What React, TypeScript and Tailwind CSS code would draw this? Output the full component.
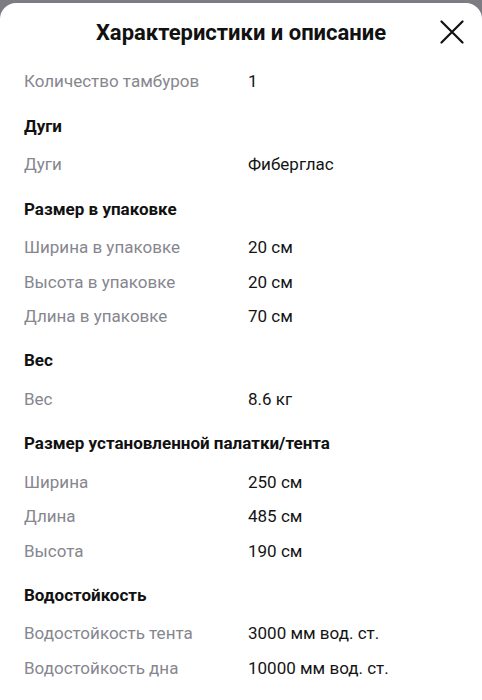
type Row = { label: string; value: string };
type Section = { title?: string; rows: Row[] };

const sections: Section[] = [
  { rows: [{ label: "Количество тамбуров", value: "1" }] },
  { title: "Дуги", rows: [{ label: "Дуги", value: "Фиберглас" }] },
  {
    title: "Размер в упаковке",
    rows: [
      { label: "Ширина в упаковке", value: "20 см" },
      { label: "Высота в упаковке", value: "20 см" },
      { label: "Длина в упаковке", value: "70 см" },
    ],
  },
  { title: "Вес", rows: [{ label: "Вес", value: "8.6 кг" }] },
  {
    title: "Размер установленной палатки/тента",
    rows: [
      { label: "Ширина", value: "250 см" },
      { label: "Длина", value: "485 см" },
      { label: "Высота", value: "190 см" },
    ],
  },
  {
    title: "Водостойкость",
    rows: [
      { label: "Водостойкость тента", value: "3000 мм вод. ст." },
      { label: "Водостойкость дна", value: "10000 мм вод. ст." },
    ],
  },
];

export default function App() {
  return (
    <div className="h-[700px] w-[482px] overflow-hidden bg-[#7c7c82] pt-[3px] font-['Roboto',sans-serif]">
      <div className="h-full rounded-t-[16px] bg-white">
        {/* шапка */}
        <div className="relative flex h-[58px] items-center justify-center">
          <h1 className="text-[22px] font-bold text-[#111]">Характеристики и описание</h1>
          <button className="absolute right-[18px] top-[17px] text-[#111]">
            <svg width="24" height="24" viewBox="0 0 24 24" fill="none" stroke="currentColor" strokeWidth="2.2" strokeLinecap="round">
              <path d="M1.5 1.5L22.5 22.5M22.5 1.5L1.5 22.5" />
            </svg>
          </button>
        </div>

        <div className="px-6 pt-[4px]">
          {sections.map((s, i) => (
            <div key={i}>
              {s.title && (
                <h2 className="mb-[10px] mt-[14.5px] h-[24px] text-[17px] leading-[24px] font-bold text-[#111]">
                  {s.title}
                </h2>
              )}
              {s.rows.map((r) => (
                <div key={r.label} className="flex h-[34.4px] items-center text-[17px]">
                  <span className="w-[224px] shrink-0 text-[#86868f]">{r.label}</span>
                  <span className="text-[#141414]">{r.value}</span>
                </div>
              ))}
            </div>
          ))}
        </div>
      </div>
    </div>
  );
}
